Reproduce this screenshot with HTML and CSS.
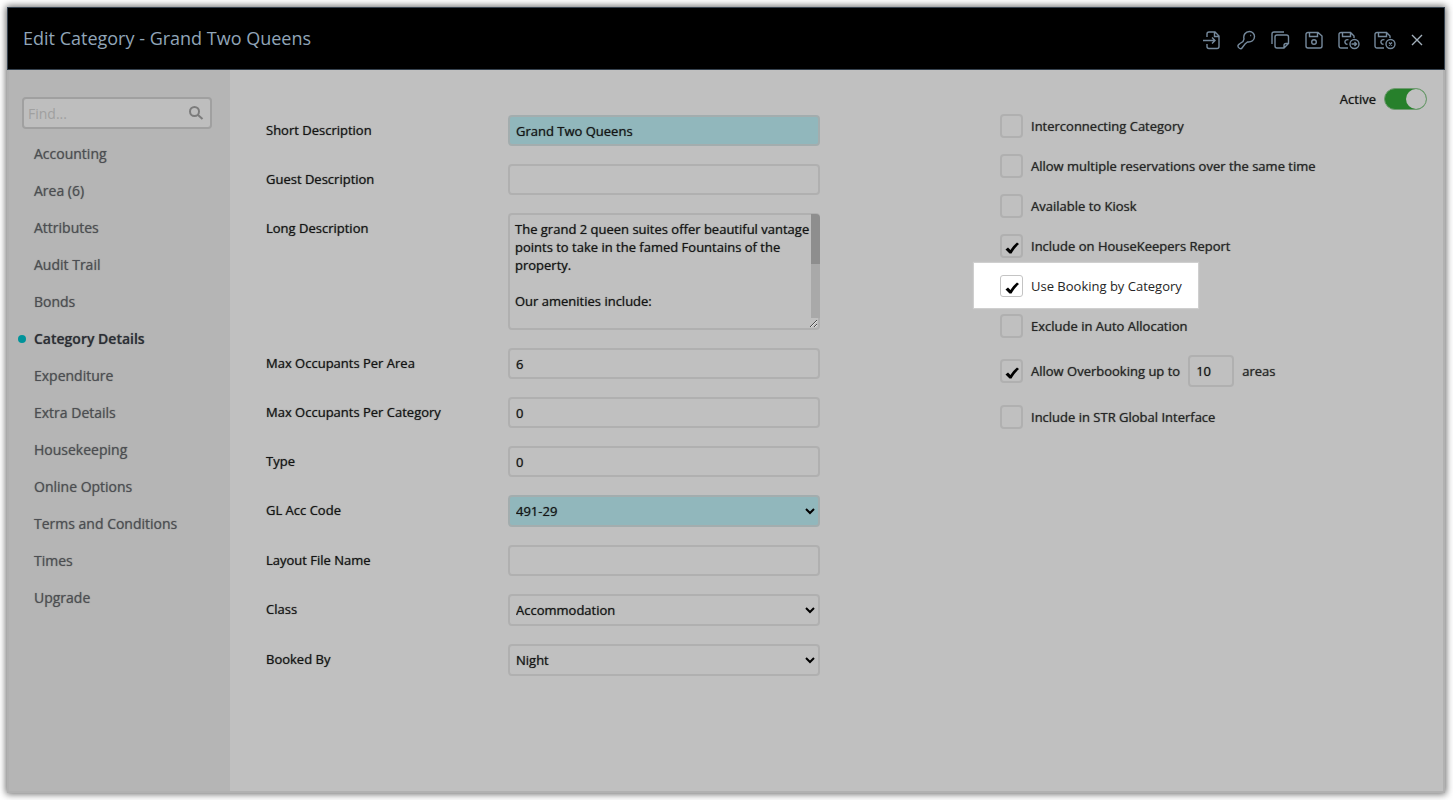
FILE: index.html
```
<!DOCTYPE html>
<html lang="en">
<head>
    <meta charset="UTF-8">
    <meta name="viewport" content="width=device-width, initial-scale=1.0">
    <title>Edit Category - Grand Two Queens</title>
    <link rel="stylesheet" href="styles.css">
</head>
<body>
    <div class="dialog">
        <header class="header">
            <h1>Edit Category - Grand Two Queens</h1>
            <div class="toolbar">
                <button type="button" aria-label="Exit"><svg width="20" height="20" viewBox="0 0 20 20"><path d="M5 7V4a2 2 0 0 1 2-2h6l4 4v10.500a2 2 0 0 1-2 2H7a2 2 0 0 1-2-2V14M12.500 2v4.500H17M1 10.500h12M10 7.500l3 3-3 3"/></svg></button>
                <button type="button" aria-label="Access"><svg width="20" height="20" viewBox="0 0 20 20"><path d="M8 9C7 5 9.500 1.500 13.500 1.500a5 5 0 0 1 5 5c0 3.500-3 6-7 5.500L9 14l-3 4c-1 1.500-4.500 0-4-2.500.3-1 1-1.300 2-2L7 11.500zM14.200 5.500h1"/></svg></button>
                <button type="button" aria-label="Copy"><svg width="20" height="20" viewBox="0 0 20 20"><path d="M2 14V4a2 2 0 0 1 2-2h10M7 5h9.500a2 2 0 0 1 2 2v6.500l-4.500 4.500H7a2 2 0 0 1-2-2V7a2 2 0 0 1 2-2zM18.500 13.500H16a2 2 0 0 0-2 2V18"/></svg></button>
                <button type="button" aria-label="Save"><svg width="20" height="20" viewBox="0 0 20 20"><path d="M4 2.500h10l4 3.500v10a2 2 0 0 1-2 2H4a2 2 0 0 1-2-2V4.500a2 2 0 0 1 2-2zM5.500 3v3.500h8V3"/><circle cx="10" cy="12" r="2.300"/></svg></button>
                <button type="button" aria-label="Save and exit"><svg width="22" height="20" viewBox="0 0 22 20"><path d="M10 18H3a2 2 0 0 1-2-2V4.500a2 2 0 0 1 2-2h9.500L16 6v2M4.500 3v3.500h8V3M10.500 10a2.300 2.300 0 1 0-1 4.200"/><circle cx="16.500" cy="14" r="4.500"/><path d="M13.500 14h5M16.500 12l2 2-2 2"/></svg></button>
                <button type="button" aria-label="Save and close"><svg width="22" height="20" viewBox="0 0 22 20"><path d="M10 18H3a2 2 0 0 1-2-2V4.500a2 2 0 0 1 2-2h9.500L16 6v2M4.500 3v3.500h8V3M10.500 10a2.300 2.300 0 1 0-1 4.200"/><circle cx="16.500" cy="14" r="4.500"/><path d="M15 12.500l3 3M18 12.500l-3 3"/></svg></button>
                <button type="button" aria-label="Close"><svg width="14" height="14" viewBox="0 0 14 14"><path d="M2 2l10 10M12 2L2 12"/></svg></button>
            </div>
        </header>
        <div class="content">
            <aside class="sidebar">
                <div class="search">
                    <input type="text" placeholder="Find..." aria-label="Find">
                    <svg width="16" height="16" viewBox="0 0 16 16"><circle cx="6.500" cy="6.500" r="4.500"/><path d="M10 10l4.500 4"/></svg>
                </div>
                <nav class="menu">
                    <a href="#">Accounting</a>
                    <a href="#">Area (6)</a>
                    <a href="#">Attributes</a>
                    <a href="#">Audit Trail</a>
                    <a href="#">Bonds</a>
                    <a href="#" class="active">Category Details</a>
                    <a href="#">Expenditure</a>
                    <a href="#">Extra Details</a>
                    <a href="#">Housekeeping</a>
                    <a href="#">Online Options</a>
                    <a href="#">Terms and Conditions</a>
                    <a href="#">Times</a>
                    <a href="#">Upgrade</a>
                </nav>
            </aside>
            <main class="main">
                <form class="fields">
                    <div class="field">
                        <label for="short-desc">Short Description</label>
                        <input type="text" id="short-desc" class="required" value="Grand Two Queens">
                    </div>
                    <div class="field">
                        <label for="guest-desc">Guest Description</label>
                        <input type="text" id="guest-desc">
                    </div>
                    <div class="field">
                        <label for="long-desc">Long Description</label>
                        <div class="textbox">
                            <textarea id="long-desc">The grand 2 queen suites offer beautiful vantage points to take in the famed Fountains of the property.

Our amenities include:
</textarea>
                            <div class="scrollbar"></div>
                        </div>
                    </div>
                    <div class="field">
                        <label for="max-area">Max Occupants Per Area</label>
                        <input type="text" id="max-area" value="6">
                    </div>
                    <div class="field">
                        <label for="max-category">Max Occupants Per Category</label>
                        <input type="text" id="max-category" value="0">
                    </div>
                    <div class="field">
                        <label for="type">Type</label>
                        <input type="text" id="type" value="0">
                    </div>
                    <div class="field">
                        <label for="gl-code">GL Acc Code</label>
                        <select id="gl-code" class="required"><option>491-29</option></select>
                    </div>
                    <div class="field">
                        <label for="layout-file">Layout File Name</label>
                        <input type="text" id="layout-file">
                    </div>
                    <div class="field">
                        <label for="class">Class</label>
                        <select id="class"><option>Accommodation</option></select>
                    </div>
                    <div class="field">
                        <label for="booked-by">Booked By</label>
                        <select id="booked-by"><option>Night</option></select>
                    </div>
                </form>
                <div class="options">
                    <label class="switch">Active <input type="checkbox" checked></label>
                    <div class="option">
                        <input type="checkbox" id="interconnecting">
                        <label for="interconnecting">Interconnecting Category</label>
                    </div>
                    <div class="option">
                        <input type="checkbox" id="multiple">
                        <label for="multiple">Allow multiple reservations over the same time</label>
                    </div>
                    <div class="option">
                        <input type="checkbox" id="kiosk">
                        <label for="kiosk">Available to Kiosk</label>
                    </div>
                    <div class="option">
                        <input type="checkbox" id="housekeepers" checked>
                        <label for="housekeepers">Include on HouseKeepers Report</label>
                    </div>
                    <div class="option highlight">
                        <input type="checkbox" id="by-category" checked>
                        <label for="by-category">Use Booking by Category</label>
                    </div>
                    <div class="option">
                        <input type="checkbox" id="exclude-auto">
                        <label for="exclude-auto">Exclude in Auto Allocation</label>
                    </div>
                    <div class="option overbooking">
                        <input type="checkbox" id="overbooking" checked>
                        <label for="overbooking">Allow Overbooking up to</label>
                        <input type="text" id="overbooking-count" value="10">
                        <label for="overbooking-count">areas</label>
                    </div>
                    <div class="option">
                        <input type="checkbox" id="str-global">
                        <label for="str-global">Include in STR Global Interface</label>
                    </div>
                </div>
            </main>
        </div>
    </div>
</body>
</html>
```

FILE: styles.css
```
* {
    box-sizing: border-box;
}
body {
    margin: 0;
    padding: 7px 8px 7px 7px;
    min-height: 100vh;
    display: flex;
    background-color: #fff;
    color: #141414;
    font-family: "Open Sans", sans-serif;
    font-size: 13px;
}
input, select, textarea, button {
    font: inherit;
    color: inherit;
}
svg {
    display: block;
    fill: none;
    stroke: currentColor;
}
.dialog {
    flex: 1;
    display: flex;
    flex-direction: column;
    background-color: #c0c0c0;
    box-shadow: 0 0 7px 1px rgba(0, 0, 0, 0.6);
}
.header {
    display: flex;
    justify-content: space-between;
    align-items: center;
    height: 63px;
    padding: 0 20px 2px 15px;
    background-color: #000;
    border: 1px solid #36424f;
    color: #91a5b8;
}
.header h1 {
    margin: 0;
    font-size: 18px;
    font-weight: 400;
}
.toolbar {
    display: flex;
    align-items: center;
    gap: 14px;
    padding-top: 4px;
}
.toolbar button {
    padding: 0;
    border: none;
    background: none;
    color: #75899c;
    cursor: pointer;
}
.toolbar svg {
    stroke-width: 1.4;
}
.toolbar button:last-child {
    color: #a3b0bc;
}
.content {
    flex: 1;
    display: flex;
    border: 2px solid #b1b1b1;
    border-top: none;
    text-shadow: 0 0 1px rgba(0, 0, 0, 0.6);
}
.sidebar {
    width: 221px;
    padding: 27px 18px 0 13px;
    background-color: #b5b5b5;
}
.search {
    display: flex;
    align-items: center;
    height: 32px;
    padding: 0 6px 0 4px;
    border: 2px solid #a0a0a0;
    border-radius: 4px;
    background-color: #bebebe;
    color: #7c7c7c;
}
.search input {
    flex: 1;
    min-width: 0;
    padding: 0;
    border: none;
    outline: none;
    background: none;
    font-size: 14px;
}
.search input::placeholder {
    color: #a0a0a0;
}
.search svg {
    stroke-width: 2;
}
.menu {
    display: flex;
    flex-direction: column;
    padding-top: 6px;
}
.menu a {
    display: flex;
    align-items: center;
    height: 37px;
    padding-left: 12px;
    color: #4c4e52;
    font-size: 14px;
    text-decoration: none;
    text-shadow: 0 0 1px rgba(60, 60, 60, 0.6);
}
.menu .active {
    padding-left: 0;
    margin-left: -4px;
    color: #2b2e35;
    font-weight: 600;
}
.menu .active::before {
    content: "";
    width: 8px;
    height: 8px;
    margin-right: 8px;
    border-radius: 50%;
    background-color: #00939a;
}
.main {
    flex: 1;
    display: grid;
    grid-template-columns: 1fr 427px;
    gap: 180px;
    padding: 18px 16px 24px 36px;
}
.fields {
    display: flex;
    flex-direction: column;
    gap: 18px;
    padding-top: 27px;
}
.field {
    display: flex;
}
.field label {
    width: 242px;
    padding-top: 6px;
}
.field input, .field select, .field textarea, .overbooking input[type="text"] {
    flex: 1;
    min-width: 0;
    height: 31px;
    margin: 0;
    padding: 0 6px;
    border: 2px solid #b0b0b0;
    border-radius: 4px;
    outline: none;
    background-color: transparent;
    text-shadow: inherit;
}
.field select {
    appearance: none;
    height: 32px;
    background-image: url("data:image/svg+xml,%3Csvg xmlns='http://www.w3.org/2000/svg' width='10' height='7'%3E%3Cpath d='M1 1l4 4 4-4' fill='none' stroke='%23000' stroke-width='2'/%3E%3C/svg%3E");
    background-repeat: no-repeat;
    background-position: right 3px center;
}
.textbox {
    position: relative;
    display: flex;
    flex: 1;
}
.field textarea {
    height: 117px;
    padding: 5px 6px 5px 5px;
    line-height: 18px;
    overflow: hidden;
    resize: vertical;
}
.scrollbar {
    position: absolute;
    top: 1px;
    right: 0;
    bottom: 12px;
    width: 9px;
    border-radius: 0 4px 0 0;
    background: linear-gradient(#8e8e8e 48%, #a9a9a9 48%);
}
.field .required {
    border-color: #a3adae;
    background-color: #91b7bc;
}
.options {
    display: flex;
    flex-direction: column;
    gap: 17px;
}
.switch {
    display: flex;
    align-items: center;
    align-self: flex-end;
    gap: 8px;
    height: 22px;
    margin-bottom: -13px;
}
.switch input {
    appearance: none;
    display: flex;
    justify-content: flex-end;
    width: 43px;
    height: 22px;
    margin: 0;
    border: 1px solid #6f9a70;
    border-radius: 11px;
    background-color: #27802b;
}
.switch input::before {
    content: "";
    width: 20px;
    height: 20px;
    border-radius: 50%;
    background-color: #c0c0c0;
}
.option {
    display: flex;
    align-items: center;
    gap: 8px;
    height: 23px;
}
.option label {
    color: #262626;
}
.option input[type="checkbox"] {
    appearance: none;
    width: 23px;
    height: 24px;
    margin: 0;
    border: 2px solid #b0b0b0;
    border-radius: 4px;
}
.option input[type="checkbox"]:checked {
    background-image: url("data:image/svg+xml,%3Csvg xmlns='http://www.w3.org/2000/svg' width='14' height='12'%3E%3Cpath d='M.5 7.500L3 5.500l2.500 2.500C7 5.500 9.500 2.500 12 .5l2 1.500c-3 2.500-5.500 6-7.500 9.500H4.500z'/%3E%3C/svg%3E");
    background-repeat: no-repeat;
    background-position: center bottom 2px;
}
.highlight {
    align-self: flex-start;
    height: 45px;
    margin: -11px 0 -11px -26px;
    padding: 0 16px 0 26px;
    background-color: #fff;
    box-shadow: 0 0 1px 1px #cfcfcf;
    text-shadow: none;
}
.option.highlight input {
    height: 22px;
    border: 1px solid #c4c4c4;
    border-radius: 3px;
}
.overbooking {
    height: 34px;
}
.overbooking input[type="text"] {
    flex: none;
    width: 46px;
    height: 32px;
}
```
